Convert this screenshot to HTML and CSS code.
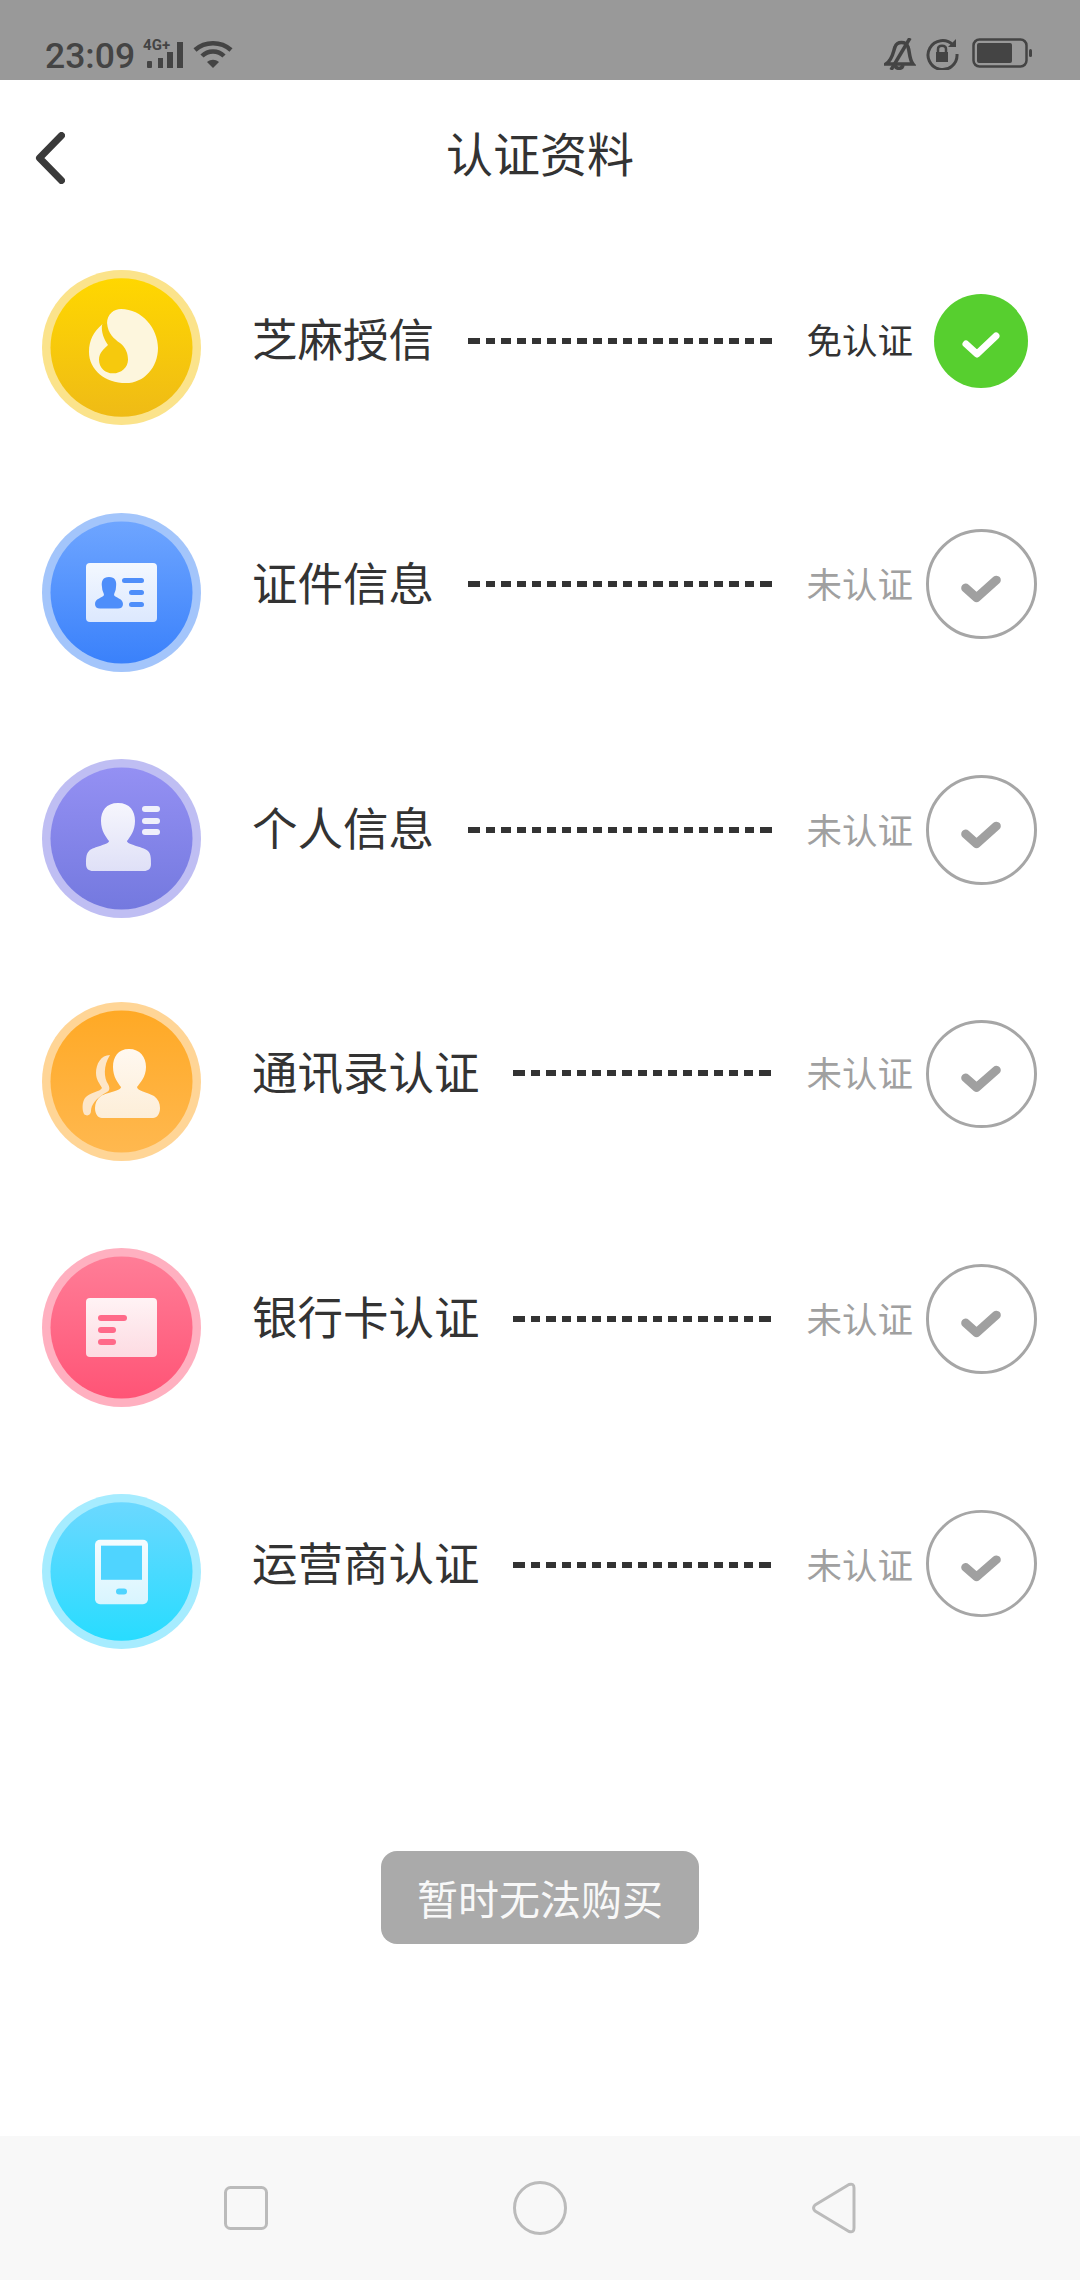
FILE: index.html
```html
<!DOCTYPE html>
<html lang="zh">
<head>
<meta charset="utf-8">
<title>认证资料</title>
<link rel="stylesheet" href="styles.css">
</head>
<body>
<div class="app">
  <header class="status">
    <div class="status-side">
      <span class="time">23:09</span>
      <span class="net">
        <span class="net-label">4G+</span>
        <svg class="signal" width="40" height="32" viewBox="0 0 40 32"><g fill="#444"><rect x="4" y="23" width="5" height="7" rx="1"/><rect x="15" y="20" width="5" height="10"/><rect x="24" y="14" width="6" height="16"/><rect x="34" y="4" width="6" height="26"/></g></svg>
      </span>
      <svg class="wifi" width="40" height="28" viewBox="0 0 40 28"><g fill="none" stroke="#444" stroke-width="4.500"><path d="M2 10C12 1 28 1 38 10"/><path d="M9 16C15 10 25 10 31 16"/></g><path d="M14 22C18 19 22 19 26 22L20 28Z" fill="#444"/></svg>
    </div>
    <div class="status-side right">
      <svg width="32" height="32" viewBox="0 0 32 32"><g fill="none" stroke="#444" stroke-width="3.500"><path d="M2 26H29C25 21 26 14 24 9C22 3 13 3 11 9C9 14 9 21 2 26Z"/><path d="M11 27C12 31.500 18 31.500 19 27"/><path d="M26 0L7 32"/></g></svg>
      <svg class="lock" width="34" height="32" viewBox="0 0 34 32"><path d="M28 7A14.500 14.500 0 1 0 32 16" fill="none" stroke="#444" stroke-width="3"/><path d="M31 1V9H23Z" fill="#444"/><path d="M11 14H23V24H11Z" fill="#444"/><path d="M13 14V11C13 6.500 21 6.500 21 11V14" fill="none" stroke="#444" stroke-width="2.500"/></svg>
      <svg width="62" height="30" viewBox="0 0 62 30"><rect x="1.500" y="1.500" width="53" height="27" rx="6" fill="none" stroke="#444" stroke-width="2.500"/><rect x="5" y="5" width="35" height="20" rx="2" fill="#444"/><rect x="57" y="11" width="3" height="8" rx="1.500" fill="#444"/></svg>
    </div>
  </header>

  <div class="titlebar">
    <svg class="back" width="30" height="52" viewBox="0 0 30 52"><path d="M26.500 3.500L4.500 26L26.500 48.500" fill="none" stroke="#3a3a3a" stroke-width="7" stroke-linecap="round" stroke-linejoin="round"/></svg>
    <h1 class="title">认证资料</h1>
  </div>

  <main class="list">
    <section class="row r1">
      <svg class="badge" width="159" height="155" viewBox="0 0 159 159" preserveAspectRatio="none"><defs><linearGradient id="g1" x1="0" y1="0" x2="0" y2="1"><stop offset="0" stop-color="#ffd700"/><stop offset="1" stop-color="#efbb16"/></linearGradient></defs><circle cx="79.500" cy="79.500" r="79.500" fill="#fbe38b"/><circle cx="79.500" cy="79.500" r="71" fill="url(#g1)"/><path d="M65 55C65 45 72 40 79 40C100 40 116 60 116 80C116 100 102 116 84 116C63 116 47 102 47 84C47 72 52 63 60 56Z" fill="#fdf6dd"/><path d="M60 56L65 54C66 66 72 70 78 75C84 80 86 86 86 92C86 100 79 106 71 106C63 106 57 100 57 92C57 85 62 81 66 77C62 71 59 64 60 56Z" fill="#f6c90d"/></svg>
      <span class="label">芝麻授信</span>
      <span class="dashes"></span>
      <span class="state on">免认证</span>
      <span class="check-slot"><svg class="check-on" width="96" height="94" viewBox="0 0 96 94" preserveAspectRatio="none"><circle cx="48" cy="47" r="47" fill="#57cf2f"/><path d="M33 50L44 60L63 42" fill="none" stroke="#fff" stroke-width="7" stroke-linecap="round" stroke-linejoin="round"/></svg></span>
    </section>

    <section class="row r2">
      <svg class="badge" width="159" height="159" viewBox="0 0 159 159"><defs><linearGradient id="g2" x1="0" y1="0" x2="0" y2="1"><stop offset="0" stop-color="#6ea5ff"/><stop offset="1" stop-color="#3a81fb"/></linearGradient><linearGradient id="c2" x1="0" y1="0" x2="0" y2="1"><stop offset="0" stop-color="#f3f8ff"/><stop offset="1" stop-color="#dce8fe"/></linearGradient></defs><circle cx="79.500" cy="79.500" r="79.500" fill="#a3c5fb"/><circle cx="79.500" cy="79.500" r="71" fill="url(#g2)"/><rect x="44" y="50" width="71" height="59" rx="4" fill="url(#c2)"/><path d="M67 64C61 64 59 68 60 74C60 78 62 80 62 82C61 85 53 85 53 91C53 94 55 95.500 58 95.500H76C79 95.500 81 94 81 91C81 85 73 85 72 82C72 80 74 78 74 74C75 68 73 64 67 64Z" fill="#4e8efa"/><g fill="#4e8efa"><rect x="80" y="65" width="22" height="5" rx="2.500"/><rect x="87" y="77" width="15" height="5" rx="2.500"/><rect x="87" y="89" width="15" height="5" rx="2.500"/></g></svg>
      <span class="label">证件信息</span>
      <span class="dashes"></span>
      <span class="state">未认证</span>
      <span class="check-slot"><svg class="check-off" width="111" height="110" viewBox="0 0 112 112" preserveAspectRatio="none"><circle cx="56" cy="56" r="54.500" fill="none" stroke="#a6a6a6" stroke-width="3"/><path d="M40 60L51 70L71 52" fill="none" stroke="#a0a0a0" stroke-width="9" stroke-linecap="round" stroke-linejoin="round"/></svg></span>
    </section>

    <section class="row r3">
      <svg class="badge" width="159" height="159" viewBox="0 0 159 159"><defs><linearGradient id="g3" x1="0" y1="0" x2="0" y2="1"><stop offset="0" stop-color="#9490f3"/><stop offset="1" stop-color="#7479df"/></linearGradient><linearGradient id="c3" x1="0" y1="0" x2="0" y2="1"><stop offset="0" stop-color="#f6f6fd"/><stop offset="1" stop-color="#dfe0f7"/></linearGradient></defs><circle cx="79.500" cy="79.500" r="79.500" fill="#bfbef3"/><circle cx="79.500" cy="79.500" r="71" fill="url(#g3)"/><path d="M76 44C64 44 59 52 59 62C59 72 64 78 67 82C67 86 52 87 47 92C44 95 44 100 44 105C44 110 47 112 51 112H102C106 112 109 110 109 105C109 100 109 95 106 92C100 87 85 86 85 82C88 78 93 72 93 62C93 52 88 44 76 44Z" fill="url(#c3)"/><g fill="#eff0fb"><rect x="100" y="47" width="18" height="6" rx="3"/><rect x="100" y="59" width="18" height="6" rx="3"/><rect x="100" y="70" width="18" height="6" rx="3"/></g></svg>
      <span class="label">个人信息</span>
      <span class="dashes"></span>
      <span class="state">未认证</span>
      <span class="check-slot"><svg class="check-off" width="111" height="110" viewBox="0 0 112 112" preserveAspectRatio="none"><circle cx="56" cy="56" r="54.500" fill="none" stroke="#a6a6a6" stroke-width="3"/><path d="M40 60L51 70L71 52" fill="none" stroke="#a0a0a0" stroke-width="9" stroke-linecap="round" stroke-linejoin="round"/></svg></span>
    </section>

    <section class="row r4">
      <svg class="badge" width="159" height="159" viewBox="0 0 159 159"><defs><linearGradient id="g4" x1="0" y1="0" x2="0" y2="1"><stop offset="0" stop-color="#ffa925"/><stop offset="1" stop-color="#ffb84f"/></linearGradient><linearGradient id="c4" x1="0" y1="0" x2="0" y2="1"><stop offset="0" stop-color="#fff8f0"/><stop offset="1" stop-color="#fdeed8"/></linearGradient></defs><circle cx="79.500" cy="79.500" r="79.500" fill="#ffd596"/><circle cx="79.500" cy="79.500" r="71" fill="url(#g4)"/><path d="M87 47C76 47 71 55 71 65C71 75 76 81 79 85C79 89 66 90 59 94C55 97 53 101 53 106C53 112 56 116 60 116H111C115 116 118 112 118 106C118 101 116 97 112 94C105 90 95 89 95 85C98 81 104 75 104 65C104 55 98 47 87 47Z" fill="url(#c4)"/><path d="M68 53C59 53 54 62 54 71C54 78 58 82 60 86C58 90 48 90 43 96C40 100 40 108 42 112C45 115 49 113 49 109C49 103 54 96 65 90C69 88 67 84 66 82C62 76 61 64 68 53Z" fill="#fde6c8"/></svg>
      <span class="label wide">通讯录认证</span>
      <span class="dashes short"></span>
      <span class="state">未认证</span>
      <span class="check-slot"><svg class="check-off" width="111" height="108" viewBox="0 0 112 112" preserveAspectRatio="none"><circle cx="56" cy="56" r="54.500" fill="none" stroke="#a6a6a6" stroke-width="3"/><path d="M40 60L51 70L71 52" fill="none" stroke="#a0a0a0" stroke-width="9" stroke-linecap="round" stroke-linejoin="round"/></svg></span>
    </section>

    <section class="row r5">
      <svg class="badge" width="159" height="159" viewBox="0 0 159 159"><defs><linearGradient id="g5" x1="0" y1="0" x2="0" y2="1"><stop offset="0" stop-color="#ff7d97"/><stop offset="1" stop-color="#ff5476"/></linearGradient><linearGradient id="c5" x1="0" y1="0" x2="0" y2="1"><stop offset="0" stop-color="#fff3f5"/><stop offset="1" stop-color="#fddbe2"/></linearGradient></defs><circle cx="79.500" cy="79.500" r="79.500" fill="#ffb0c0"/><circle cx="79.500" cy="79.500" r="71" fill="url(#g5)"/><rect x="44" y="50" width="71" height="59" rx="4" fill="url(#c5)"/><g fill="#ff6a89"><rect x="56" y="67" width="29" height="6" rx="3"/><rect x="56" y="79" width="18" height="6" rx="3"/><rect x="56" y="91" width="18" height="6" rx="3"/></g></svg>
      <span class="label wide">银行卡认证</span>
      <span class="dashes short"></span>
      <span class="state">未认证</span>
      <span class="check-slot"><svg class="check-off" width="111" height="110" viewBox="0 0 112 112" preserveAspectRatio="none"><circle cx="56" cy="56" r="54.500" fill="none" stroke="#a6a6a6" stroke-width="3"/><path d="M40 60L51 70L71 52" fill="none" stroke="#a0a0a0" stroke-width="9" stroke-linecap="round" stroke-linejoin="round"/></svg></span>
    </section>

    <section class="row r6">
      <svg class="badge" width="159" height="155" viewBox="0 0 159 159" preserveAspectRatio="none"><defs><linearGradient id="g6" x1="0" y1="0" x2="0" y2="1"><stop offset="0" stop-color="#6bd8ff"/><stop offset="1" stop-color="#28dcff"/></linearGradient><linearGradient id="c6" x1="0" y1="0" x2="0" y2="1"><stop offset="0" stop-color="#f4fcff"/><stop offset="1" stop-color="#d8f5ff"/></linearGradient></defs><circle cx="79.500" cy="79.500" r="79.500" fill="#a6ecff"/><circle cx="79.500" cy="79.500" r="71" fill="url(#g6)"/><rect x="53" y="47" width="53" height="66" rx="5" fill="url(#c6)"/><rect x="59" y="53" width="41" height="35" fill="#4fd4ff"/><rect x="74" y="97" width="11" height="6" rx="3" fill="#4fd4ff"/></svg>
      <span class="label wide">运营商认证</span>
      <span class="dashes short"></span>
      <span class="state">未认证</span>
      <span class="check-slot"><svg class="check-off" width="111" height="107" viewBox="0 0 112 112" preserveAspectRatio="none"><circle cx="56" cy="56" r="54.500" fill="none" stroke="#a6a6a6" stroke-width="3"/><path d="M40 60L51 70L71 52" fill="none" stroke="#a0a0a0" stroke-width="9" stroke-linecap="round" stroke-linejoin="round"/></svg></span>
    </section>
  </main>

  <div class="action"><button class="buy" type="button">暂时无法购买</button></div>

  <nav class="navbar">
    <svg width="44" height="44" viewBox="0 0 44 44"><rect x="1.500" y="1.500" width="41" height="41" rx="5" fill="none" stroke="#bbb" stroke-width="3"/></svg>
    <svg width="54" height="54" viewBox="0 0 54 54"><circle cx="27" cy="27" r="25.500" fill="none" stroke="#bbb" stroke-width="3"/></svg>
    <svg width="44" height="52" viewBox="0 0 44 52"><path d="M3 23L37 2.500Q42 1 42 6V46Q42 51 37 49.500L3 29Q0 26 3 23Z" fill="none" stroke="#bbb" stroke-width="3" stroke-linejoin="round"/></svg>
  </nav>
</div>
</body>
</html>
```

FILE: styles.css
```css
* { box-sizing: border-box; }
html, body { margin: 0; padding: 0; background: #fff; }
.app {
  width: 1080px;
  height: 2280px;
  display: flex;
  flex-direction: column;
  font-family: "Noto Sans CJK SC", "Noto Sans", sans-serif;
  color: #333;
  overflow: hidden;
}
.status {
  height: 80px;
  background: #999;
  display: flex;
  justify-content: space-between;
  padding: 38px 46px 0 45px;
  color: #444;
}
.status-side { display: flex; align-items: flex-start; gap: 8px; }
.status-side.right { gap: 9px; }
.lock { margin-right: 4px; }
.time {
  font-family: Roboto, sans-serif;
  font-weight: 500;
  font-size: 35.500px;
  line-height: 36px;
}
.net { position: relative; width: 40px; height: 32px; display: block; }
.net-label {
  position: absolute;
  left: 0;
  top: 1px;
  font-family: Roboto, sans-serif;
  font-weight: 700;
  font-size: 15px;
  line-height: 13px;
  white-space: nowrap;
}
.signal { position: absolute; left: 0; top: 0; }
.wifi { margin: 2px 0 0 2px; }

.titlebar {
  height: 150px;
  padding-bottom: 6px;
  display: flex;
  align-items: center;
  justify-content: center;
  position: relative;
}
.back { position: absolute; left: 35px; top: 52px; }
.title {
  margin: 0;
  font-size: 47px;
  font-weight: 400;
  line-height: 50px;
}

.list { display: flex; flex-direction: column; padding: 40px 43px 0 42px; }
.row { height: 159px; display: flex; align-items: flex-start; position: relative; }
.r2 { margin-top: 84px; }
.r3 { margin-top: 87px; }
.r4 { margin-top: 84px; }
.r5 { margin-top: 87px; }
.r6 { margin-top: 87px; }
.badge { flex: none; display: block; margin-right: 51px; }
.label {
  flex: none;
  width: 179px;
  margin-top: 42px;
  font-size: 45.500px;
  line-height: 50px;
  white-space: nowrap;
  color: #333;
}
.r2 .label, .r4 .label { margin-top: 43px; }
.label.wide { width: 225px; }
.dashes {
  flex: none;
  width: 304px;
  height: 6px;
  margin: 68px 0 0 37px;
  border-left: 3px solid #333;
  border-right: 3px solid #333;
  background: repeating-linear-gradient(to right, #333 0 9.200px, transparent 9.200px 15.200px);
}
.dashes.short { width: 258px; margin-left: 36px; }
.state {
  position: absolute;
  left: 764.500px;
  top: 45px;
  font-size: 35.500px;
  line-height: 50px;
  color: #a0a0a0;
  white-space: nowrap;
}
.state.on { color: #333; top: 44px; }
.check-slot { position: absolute; left: 883.500px; top: 16px; display: block; line-height: 0; }
.r1 .check-slot { left: 890.500px; top: 24px; }
.r4 .check-slot { top: 18px; }

.action { display: flex; justify-content: center; margin-top: 198px; }
.buy {
  width: 318px;
  height: 93px;
  border: 0;
  border-radius: 16px;
  background: #aaa;
  color: #f8f8f8;
  font: 400 41px/1 "Noto Sans CJK SC", sans-serif;
  padding: 0;
}
.navbar {
  margin-top: auto;
  height: 144px;
  background: #f8f8f8;
  display: flex;
  align-items: center;
  padding: 0 224px;
  justify-content: space-between;
}
```
